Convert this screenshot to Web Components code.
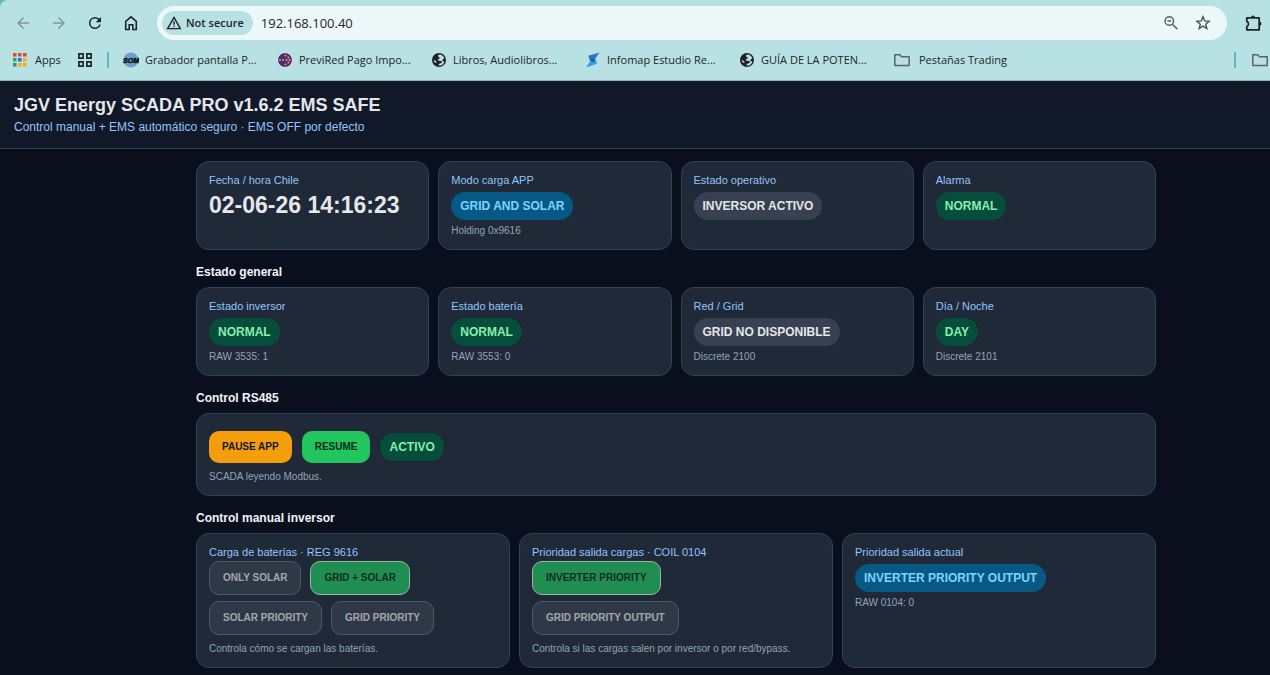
<!DOCTYPE html>
<html lang="es">
<head>
<meta charset="utf-8">
<meta name="viewport" content="width=device-width, initial-scale=1">
<title>JGV Energy SCADA PRO</title>
<style>
  body { margin: 0; min-height: 100vh; background: #0a0f1e; color: #e5e7eb; font-family: "Liberation Sans", Arial, sans-serif; overflow-x: hidden; }
</style>
</head>
<body>
<browser-chrome></browser-chrome>
<scada-app></scada-app>

<script>
const define = (name, html, setup) => {
  const tpl = document.createElement('template');
  tpl.innerHTML = html;
  customElements.define(name, class extends HTMLElement {
    constructor() {
      super();
      this.attachShadow({ mode: 'open' }).append(tpl.content.cloneNode(true));
    }
    connectedCallback() { if (setup) setup(this, this.shadowRoot); }
  });
};

/* ---------- icons ---------- */
const squares = ['#ea4335','#ea4335','#ea4335','#34a853','#1a73e8','#fbab05','#2b9a55','#fbab05','#fbab05'];
const globe = '<circle cx="8" cy="8" r="7" fill="#202124"/><path d="M8.600 2.600C6.500 2.900 6.700 4.700 8 5.200c1.200.5 1 1.700-.3 1.700-1.300.1-1.100 1-.5 1.500.9.600 2.500.1 3.400.9.700.7.200 1.800-.9 1.900-1.600.1-2 1-2.200 2.400 2.700.2 5.300-1.200 5.900-4.200-1.500.4-2.100-.5-2-1.400.1-1.100 1.600-1 1.800-2.100-.9-1.900-2.700-3.300-4.600-3.300zM2.600 8.200c.5 1.900 1.600 2.500 3 2.600.2-1.300-.9-2.500-3-2.600z" fill="#b8e1e4"/>';
const ICONS = {
  back: [24, '<path d="M20 11H7.830l5.590-5.590L12 4l-8 8 8 8 1.410-1.410L7.830 13H20z" fill="#7d9a9d"/>'],
  forward: [24, '<path d="M4 11h12.170l-5.590-5.590L12 4l8 8-8 8-1.410-1.410L16.170 13H4z" fill="#7d9a9d"/>'],
  reload: [24, '<path d="M17.650 6.350A7.960 7.960 0 0 0 12 4a8 8 0 1 0 7.730 10h-2.080A6 6 0 1 1 12 6c1.660 0 3.140.69 4.220 1.780L13 11h7V4z" fill="#1f2426"/>'],
  home: [18, '<path d="M3.700 7.300 9 2.900l5.300 4.400v8.200h-3.500v-4.700H7.200v4.700H3.700z" fill="none" stroke="#1f2426" stroke-width="1.600"/>'],
  warning: [16, '<path d="M8 2.400 14.300 13.600H1.700z" fill="none" stroke="#1f2426" stroke-width="1.400"/><path d="M8 6.200v3.600M8 10.700v1.400" stroke="#1f2426" stroke-width="1.400"/>'],
  zoomout: [18, '<circle cx="7.300" cy="7" r="4.300" fill="none" stroke="#5a6264" stroke-width="1.500"/><path d="M5.300 7h4M10.400 10.200l5 5" stroke="#5a6264" stroke-width="1.600"/>'],
  star: [18, '<path d="M9 2.700l1.700 4.200 4.400.4-3.400 2.900 1.100 4.400L9 12.200l-3.800 2.400 1.100-4.400-3.400-2.900 4.400-.4z" fill="none" stroke="#474f52" stroke-width="1.400"/>'],
  puzzle: [18, '<path d="M2.800 3.800h12.400v12H2.800v-3.300c2.200-.6 2.200-4.600 0-5.200z" fill="none" stroke="#1f2426" stroke-width="1.800" stroke-linejoin="round"/><path d="M7 3.500a2 2 0 0 1 4 0zM15.500 7.800a2 2 0 0 1 0 4z" fill="#1f2426"/>'],
  apps: [14, squares.map((c, i) => `<rect x="${i % 3 * 5}" y="${Math.floor(i / 3) * 5}" width="3.500" height="3.500" fill="${c}"/>`).join('')],
  grid: [16, '<path d="M1.900 1.900h4.200v4.200H1.900zM9.900 1.900h4.200v4.200H9.900zM1.900 9.900h4.200v4.200H1.900zM9.900 9.900h4.200v4.200H9.900z" fill="none" stroke="#1f2426" stroke-width="1.700"/>'],
  recorder: [16, '<circle cx="8" cy="8" r="7.600" fill="#6d9fce"/><text x="8" y="11" text-anchor="middle" font-family="Liberation Sans" font-size="7" font-weight="700" font-style="italic" fill="#0b1016" stroke="#0b1016" stroke-width=".5">SOM</text>'],
  previred: [16, '<circle cx="8" cy="8" r="7.600" fill="#f3e9f5"/><circle cx="8" cy="8" r="7" fill="#4b2a80"/><g fill="#f5a417"><circle cx="3" cy="8" r="1"/><circle cx="6" cy="8" r="1"/><circle cx="9.500" cy="8" r="1.100"/><circle cx="12.600" cy="8" r="1"/><circle cx="8.500" cy="3.500" r="1"/><circle cx="11.400" cy="5.400" r="1"/><circle cx="8.500" cy="12.500" r="1"/><circle cx="11.400" cy="10.600" r="1"/></g>'],
  globe: [16, globe],
  infomap: [16, '<path d="M14.500.5 3.300 3.700l1.400 4.600 3.500 1.200z" fill="#2878c8"/><path d="M1 15.500l11-3.800-1.200-4-4.200-.8z" fill="#3d9be4"/><path d="M4.700 8.300l2-1.500 4.100 1-2.500 2.500z" fill="#1d5ea8"/>'],
  folder: [18, '<path d="M1.800 3.800h5l1.700 1.900h7.700v8.800H1.800z" fill="none" stroke="#5c6467" stroke-width="1.500" stroke-linejoin="round"/>'],
};
define('ui-icon', `<style>
  :host { display: block; flex: none; width: var(--size, 18px); height: var(--size, 18px); }
  svg { display: block; width: 100%; height: 100%; }
</style><svg aria-hidden="true"></svg>`, (el, root) => {
  const [box, art] = ICONS[el.getAttribute('name')];
  const svg = root.querySelector('svg');
  svg.setAttribute('viewBox', `0 0 ${box} ${box}`);
  svg.innerHTML = art;
});

/* ---------- browser frame ---------- */
define('tool-button', `<style>
  :host { display: block; flex: none; }
  button { display: grid; place-items: center; width: var(--w, 36px); height: 34px; padding: 0; border: 0; background: none; }
</style><button type="button"><slot></slot></button>`, (el, root) => {
  root.querySelector('button').setAttribute('aria-label', el.getAttribute('label'));
});

define('bookmark-link', `<style>
  :host { display: block; flex: none; width: var(--w, 154px); }
  a { display: flex; align-items: center; gap: var(--gap, 6px); color: #1f2426; text-decoration: none; white-space: nowrap; font-size: 11px; line-height: 16px; }
</style><a href="#"><slot name="icon"></slot><slot></slot></a>`, (el, root) => {
  if (el.hasAttribute('label')) root.querySelector('a').setAttribute('aria-label', el.getAttribute('label'));
});

define('browser-chrome', `<style>
  :host { display: block; background: #5bbac3; font-family: "Open Sans", "Segoe UI", sans-serif; }
  .frame { background: #b8e1e4; border-radius: 8px 0 0 0; border-bottom: 1px solid #8db8bb; overflow: hidden; }
  .tools { display: flex; align-items: center; padding: 6px 0 0 5px; }
  .omnibox { flex: 1; display: flex; align-items: center; height: 34px; margin: 0 9px 0 8px; padding: 0 8px 0 5px; box-sizing: border-box; border-radius: 17px; background: #ecf8f8; }
  .secure { display: flex; align-items: center; gap: 4px; height: 24px; padding: 0 9px 0 4px; border: 0; border-radius: 12px; background: #b8e1e4; color: #1f2426; font: 600 11px/16px "Open Sans", sans-serif; white-space: nowrap; }
  input { flex: 1; min-width: 0; padding: 0; margin-left: 8px; border: 0; outline: 0; background: none; color: #1f2426; font: 13px/20px "Open Sans", sans-serif; }
  .bookmarks { display: flex; align-items: center; height: 40px; padding-left: 13px; }
  .rule { flex: none; width: 2px; height: 16px; background: #5bbac3; }
  .rule.start { margin-right: 14px; }
  .rule.end { margin-left: auto; margin-right: 15px; }
</style>
<div class="frame">
  <div class="tools">
    <tool-button label="Back"><ui-icon name="back"></ui-icon></tool-button>
    <tool-button label="Forward"><ui-icon name="forward"></ui-icon></tool-button>
    <tool-button label="Reload"><ui-icon name="reload"></ui-icon></tool-button>
    <tool-button label="Home"><ui-icon name="home"></ui-icon></tool-button>
    <div class="omnibox">
      <button class="secure" type="button"><ui-icon name="warning" style="--size:16px"></ui-icon>Not secure</button>
      <input type="text" aria-label="Address" value="192.168.100.40">
      <tool-button label="Zoom" style="--w:32px"><ui-icon name="zoomout"></ui-icon></tool-button>
      <tool-button label="Bookmark this page" style="--w:32px"><ui-icon name="star"></ui-icon></tool-button>
    </div>
    <tool-button label="Extensions" style="--w:34px"><ui-icon name="puzzle"></ui-icon></tool-button>
  </div>
  <div class="bookmarks">
    <bookmark-link style="--w:64px;--gap:8px"><ui-icon slot="icon" name="apps" style="--size:14px"></ui-icon>Apps</bookmark-link>
    <bookmark-link style="--w:30px" label="Tab groups"><ui-icon slot="icon" name="grid" style="--size:16px"></ui-icon></bookmark-link>
    <span class="rule start"></span>
    <bookmark-link><ui-icon slot="icon" name="recorder" style="--size:16px"></ui-icon>Grabador pantalla P...</bookmark-link>
    <bookmark-link><ui-icon slot="icon" name="previred" style="--size:16px"></ui-icon>PreviRed Pago Impo...</bookmark-link>
    <bookmark-link><ui-icon slot="icon" name="globe" style="--size:16px"></ui-icon>Libros, Audiolibros...</bookmark-link>
    <bookmark-link><ui-icon slot="icon" name="infomap" style="--size:16px"></ui-icon>Infomap Estudio Re...</bookmark-link>
    <bookmark-link><ui-icon slot="icon" name="globe" style="--size:16px"></ui-icon>GUÍA DE LA POTEN...</bookmark-link>
    <bookmark-link style="--gap:8px"><ui-icon slot="icon" name="folder"></ui-icon>Pestañas Trading</bookmark-link>
    <span class="rule end"></span>
    <bookmark-link style="--w:19px" label="All bookmarks"><ui-icon slot="icon" name="folder"></ui-icon></bookmark-link>
  </div>
</div>`);

/* ---------- dashboard parts ---------- */
define('status-pill', `<style>
  :host { display: inline-block; padding: 7px 9px; border-radius: 14px; font-size: 12px; line-height: 14px; font-weight: 700; white-space: nowrap; background: #374151; color: #e5e7eb; }
  :host([tone="ok"]) { background: #064e3b; color: #86efac; }
  :host([tone="info"]) { background: #075985; color: #7dd3fc; }
</style><slot></slot>`);

define('data-card', `<style>
  :host { display: block; box-sizing: border-box; padding: 12px; border: 1px solid #334155; border-radius: 13px; background: #1f2937; }
  .label { font-size: 11px; line-height: 13px; color: #93c5fd; }
  .body { margin-top: 5px; line-height: 0; }
  :host([tight]) .body { margin-top: 2px; }
  .note { font-size: 10px; line-height: 12px; color: #94a3b8; }
  .note ::slotted(*) { display: block; margin-top: 5px; }
  :host([controls]) .note ::slotted(*) { margin-top: 8px; }
</style>
<div class="label"><slot name="label"></slot></div>
<div class="body"><slot></slot></div>
<div class="note"><slot name="note"></slot></div>`);

define('date-value', `<style>
  :host { display: block; font-size: 23px; line-height: 26px; font-weight: 700; white-space: nowrap; }
</style><slot></slot>`);

define('action-button', `<style>
  :host { display: block; }
  button { padding: 10px 13px; border: 0; border-radius: 10px; font: 700 10px/12px "Liberation Sans", Arial, sans-serif; white-space: nowrap; background: #374151; color: #e5e7eb; }
  button:disabled { border: 1px solid #64748b; opacity: .65; }
  :host([kind="warn"]) button { background: #f59e0b; color: #111827; }
  :host([kind="go"]) button { background: #22c55e; color: #052e16; }
  :host([kind="go"]) button:disabled { border-color: #dcfce7; }
</style><button type="button"><slot></slot></button>`, (el, root) => {
  root.querySelector('button').disabled = el.hasAttribute('disabled');
});

define('button-row', `<style>
  :host { display: flex; flex-wrap: wrap; align-items: center; row-gap: 6px; }
  ::slotted(*) { margin-right: var(--space, 9px); }
</style><slot></slot>`);

define('card-section', `<style>
  :host { display: block; }
  h2 { margin: 15px 0 7px; font-size: 12px; line-height: 15px; font-weight: 700; color: #f1f5f9; }
  .grid { display: grid; grid-template-columns: repeat(var(--cols, 4), minmax(0, 1fr)); gap: 9px; }
</style><h2></h2><div class="grid"><slot></slot></div>`, (el, root) => {
  const h = root.querySelector('h2');
  if (el.hasAttribute('heading')) h.textContent = el.getAttribute('heading'); else h.remove();
});

define('scada-header', `<style>
  :host { display: block; padding: 13px 14px; background: #111827; border-bottom: 1px solid #334155; }
  h1 { margin: 0 0 4px; font-size: 18px; line-height: 22px; }
  p { margin: 0; font-size: 12px; line-height: 15px; color: #93c5fd; }
</style>
<h1>JGV Energy SCADA PRO v1.6.2 EMS SAFE</h1>
<p>Control manual + EMS automático seguro · EMS OFF por defecto</p>`);

define('scada-app', `<style>
  :host { display: block; }
  main { padding: 12px 0 8px 82px; }
  .content { max-width: 960px; margin: 0 auto; }
</style>
<scada-header></scada-header>
<main><div class="content">
  <card-section>
    <data-card><span slot="label">Fecha / hora Chile</span><date-value>02-06-26 14:16:23</date-value></data-card>
    <data-card><span slot="label">Modo carga APP</span><status-pill tone="info">GRID AND SOLAR</status-pill><span slot="note">Holding 0x9616</span></data-card>
    <data-card><span slot="label">Estado operativo</span><status-pill>INVERSOR ACTIVO</status-pill></data-card>
    <data-card><span slot="label">Alarma</span><status-pill tone="ok">NORMAL</status-pill></data-card>
  </card-section>
  <card-section heading="Estado general">
    <data-card><span slot="label">Estado inversor</span><status-pill tone="ok">NORMAL</status-pill><span slot="note">RAW 3535: 1</span></data-card>
    <data-card><span slot="label">Estado batería</span><status-pill tone="ok">NORMAL</status-pill><span slot="note">RAW 3553: 0</span></data-card>
    <data-card><span slot="label">Red / Grid</span><status-pill>GRID NO DISPONIBLE</status-pill><span slot="note">Discrete 2100</span></data-card>
    <data-card><span slot="label">Día / Noche</span><status-pill tone="ok">DAY</status-pill><span slot="note">Discrete 2101</span></data-card>
  </card-section>
  <card-section heading="Control RS485" style="--cols:1">
    <data-card controls>
      <button-row style="--space:10px">
        <action-button kind="warn">PAUSE APP</action-button>
        <action-button kind="go">RESUME</action-button>
        <status-pill tone="ok">ACTIVO</status-pill>
      </button-row>
      <span slot="note">SCADA leyendo Modbus.</span>
    </data-card>
  </card-section>
  <card-section heading="Control manual inversor" style="--cols:3">
    <data-card tight controls><span slot="label">Carga de baterías · REG 9616</span>
      <button-row>
        <action-button disabled>ONLY SOLAR</action-button>
        <action-button disabled kind="go">GRID + SOLAR</action-button>
        <action-button disabled>SOLAR PRIORITY</action-button>
        <action-button disabled>GRID PRIORITY</action-button>
      </button-row>
      <span slot="note">Controla cómo se cargan las baterías.</span>
    </data-card>
    <data-card tight controls><span slot="label">Prioridad salida cargas · COIL 0104</span>
      <button-row>
        <action-button disabled kind="go">INVERTER PRIORITY</action-button>
        <action-button disabled>GRID PRIORITY OUTPUT</action-button>
      </button-row>
      <span slot="note">Controla si las cargas salen por inversor o por red/bypass.</span>
    </data-card>
    <data-card><span slot="label">Prioridad salida actual</span><status-pill tone="info">INVERTER PRIORITY OUTPUT</status-pill><span slot="note">RAW 0104: 0</span></data-card>
  </card-section>
</div></main>`);
</script>
</body>
</html>
